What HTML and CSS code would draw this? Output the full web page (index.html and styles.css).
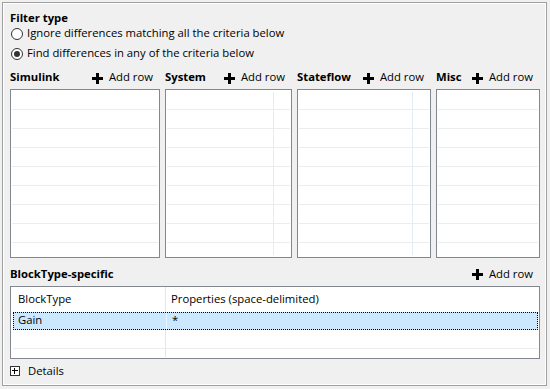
FILE: index.html
```html
<!DOCTYPE html>
<html lang="en">
<head>
    <meta charset="UTF-8">
    <title>Filter type</title>
    <link rel="stylesheet" href="styles.css">
</head>
<body>
    <div class="frame">
        <div class="title">Filter type</div>
        <div class="radio"><span class="dot"></span>Ignore differences matching all the criteria below</div>
        <div class="radio checked"><span class="dot"></span>Find differences in any of the criteria below</div>

        <div class="panes">
            <div class="pane">
                <div class="pane-head">
                    <b>Simulink</b>
                    <span class="add"><svg width="11" height="11" viewBox="0 0 11 11"><rect x="0" y="4" width="11" height="3"/><rect x="4" y="0" width="3" height="11"/></svg>Add row</span>
                </div>
                <div class="list">
                    <div class="row"></div><div class="row"></div><div class="row"></div><div class="row"></div>
                    <div class="row"></div><div class="row"></div><div class="row"></div><div class="row"></div>
                </div>
            </div>
            <div class="pane">
                <div class="pane-head">
                    <b>System</b>
                    <span class="add"><svg width="11" height="11" viewBox="0 0 11 11"><rect x="0" y="4" width="11" height="3"/><rect x="4" y="0" width="3" height="11"/></svg>Add row</span>
                </div>
                <div class="list has-col">
                    <div class="row"></div><div class="row"></div><div class="row"></div><div class="row"></div>
                    <div class="row"></div><div class="row"></div><div class="row"></div><div class="row"></div>
                </div>
            </div>
            <div class="pane">
                <div class="pane-head">
                    <b>Stateflow</b>
                    <span class="add"><svg width="11" height="11" viewBox="0 0 11 11"><rect x="0" y="4" width="11" height="3"/><rect x="4" y="0" width="3" height="11"/></svg>Add row</span>
                </div>
                <div class="list has-col">
                    <div class="row"></div><div class="row"></div><div class="row"></div><div class="row"></div>
                    <div class="row"></div><div class="row"></div><div class="row"></div><div class="row"></div>
                </div>
            </div>
            <div class="pane">
                <div class="pane-head">
                    <b>Misc</b>
                    <span class="add"><svg width="11" height="11" viewBox="0 0 11 11"><rect x="0" y="4" width="11" height="3"/><rect x="4" y="0" width="3" height="11"/></svg>Add row</span>
                </div>
                <div class="list">
                    <div class="row"></div><div class="row"></div><div class="row"></div><div class="row"></div>
                    <div class="row"></div><div class="row"></div><div class="row"></div><div class="row"></div>
                </div>
            </div>
        </div>

        <div class="bt-head">
            <b>BlockType-specific</b>
            <span class="add"><svg width="11" height="11" viewBox="0 0 11 11"><rect x="0" y="4" width="11" height="3"/><rect x="4" y="0" width="3" height="11"/></svg>Add row</span>
        </div>
        <div class="table">
            <div class="trow thead"><div class="cell">BlockType</div><div class="cell">Properties (space-delimited)</div></div>
            <div class="trow selected"><div class="cell">Gain</div><div class="cell">*</div></div>
            <div class="trow empty"><div class="cell"></div><div class="cell"></div></div>
            <div class="trow filler"><div class="cell"></div><div class="cell"></div></div>
        </div>

        <div class="details"><span class="expander"></span>Details</div>
    </div>
</body>
</html>
```

FILE: styles.css
```css
body {
    margin: 0;
    font-family: 'Open Sans', 'Noto Sans', sans-serif;
    font-size: 11.3px;
    line-height: 16px;
    color: #000;
    background: #f0f0f0;
}

.frame {
    box-sizing: border-box;
    width: 545px;
    height: 384px;
    margin: 2px;
    padding: 7px 6px 0 7px;
    border: 1px solid #a0a0a0;
    box-shadow: inset 0 0 0 1px #fff;
    display: flex;
    flex-direction: column;
}

.title {
    font-weight: 700;
    line-height: 15px;
}

.radio {
    display: flex;
    align-items: flex-start;
    height: 20px;
    gap: 4px;
}

.dot {
    box-sizing: border-box;
    width: 12px;
    height: 12px;
    margin: 3px 0 0 1px;
    border: 1px solid #333;
    border-radius: 50%;
    background: #fff;
    display: flex;
    align-items: center;
    justify-content: center;
}

.radio.checked .dot::after {
    content: "";
    width: 6px;
    height: 6px;
    border-radius: 50%;
    background: #333;
}

.panes {
    display: grid;
    grid-template-columns: 150px 127px 134px 104px;
    column-gap: 5px;
}

.pane-head, .bt-head {
    display: flex;
    justify-content: space-between;
    align-items: center;
    padding-right: 7px;
}

.pane-head {
    box-sizing: border-box;
    height: 24px;
    padding-top: 4px;
    align-items: flex-start;
}

.add {
    display: flex;
    align-items: center;
    gap: 6px;
}

.pane-head .add svg {
    margin-top: 2px;
}

.list {
    position: relative;
    box-sizing: border-box;
    height: 169px;
    padding: 1px;
    border: 1px solid #828790;
    background: #fff;
}

.list .row {
    box-sizing: border-box;
    height: 19px;
    border-bottom: 1px solid #ececec;
}

.list.has-col::after {
    content: "";
    position: absolute;
    top: 2px;
    bottom: 2px;
    right: 17px;
    width: 1px;
    background: #e6ebf3;
}

.bt-head {
    box-sizing: border-box;
    height: 28px;
    padding-top: 8px;
    align-items: flex-start;
}

.table {
    box-sizing: border-box;
    height: 73px;
    padding: 0 1px 1px 2px;
    border: 1px solid #828790;
    background: #fff;
    display: flex;
    flex-direction: column;
}

.trow {
    display: grid;
    grid-template-columns: 153px 1fr;
    box-sizing: border-box;
}

.trow .cell:first-child {
    border-right: 1px solid #e5e5e5;
}

.cell {
    padding-left: 5px;
}

.thead {
    height: 25px;
    padding-top: 4px;
}

.thead .cell:first-child {
    margin-top: -4px;
    padding-top: 4px;
}

.selected {
    height: 18px;
    line-height: 14px;
    background: #cce8ff;
    border: 1px dotted #000;
}

.selected .cell {
    padding-bottom: 2px;
}

.selected .cell:first-child {
    padding-left: 4px;
    border-right-color: #e8f4ff;
}

.empty {
    height: 19px;
    border-bottom: 1px solid #ececec;
}

.filler {
    flex: 1;
}

.details {
    display: flex;
    align-items: center;
    gap: 8px;
    padding-top: 4px;
}

.expander {
    position: relative;
    box-sizing: border-box;
    width: 10px;
    height: 10px;
    border: 1px solid #333;
    background: #fff;
}

.expander::before, .expander::after {
    content: "";
    position: absolute;
    background: #000;
}

.expander::before {
    left: 1px;
    top: 3px;
    width: 6px;
    height: 1px;
}

.expander::after {
    left: 3px;
    top: 1px;
    width: 1px;
    height: 6px;
}
```
